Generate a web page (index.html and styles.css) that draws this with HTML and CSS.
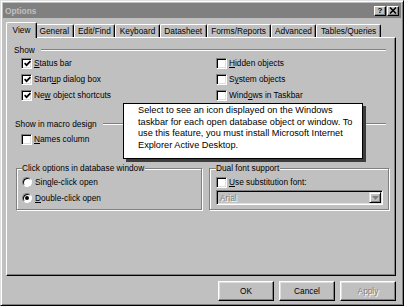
FILE: index.html
```html
<!DOCTYPE html>
<html lang="en">
<head>
    <meta charset="UTF-8">
    <title>Options</title>
    <link rel="stylesheet" href="styles.css">
</head>
<body>
    <div class="dialog">
        <div class="titleBar">
            <span class="title">Options</span>
            <div class="capBtns">
                <span class="capBtn">?</span>
                <span class="capBtn">
                    <svg width="8" height="7" viewBox="0 0 8 7"><path d="M1 0.5 L7 6.5 M7 0.5 L1 6.5" stroke="#000" stroke-width="1.6"/></svg>
                </span>
            </div>
        </div>
        <div class="tabs">
            <span class="tab selected">View</span>
            <span class="tab">General</span>
            <span class="tab">Edit/Find</span>
            <span class="tab">Keyboard</span>
            <span class="tab">Datasheet</span>
            <span class="tab">Forms/Reports</span>
            <span class="tab">Advanced</span>
            <span class="tab">Tables/Queries</span>
        </div>
        <div class="panel">
            <div class="groupHead show"><span>Show</span><i class="rule"></i></div>
            <div class="checkGrid">
                <label class="check"><span class="box"><svg width="7" height="7" viewBox="0 0 7 7"><path d="M0.6 3.2 L2.6 5.2 L6.4 1.2" fill="none" stroke="#000" stroke-width="1.7"/></svg></span><span><u>S</u>tatus bar</span></label>
                <label class="check"><span class="box"></span><span><u>H</u>idden objects</span></label>
                <label class="check"><span class="box"><svg width="7" height="7" viewBox="0 0 7 7"><path d="M0.6 3.2 L2.6 5.2 L6.4 1.2" fill="none" stroke="#000" stroke-width="1.7"/></svg></span><span>Start<u>u</u>p dialog box</span></label>
                <label class="check"><span class="box"></span><span>S<u>y</u>stem objects</span></label>
                <label class="check"><span class="box"><svg width="7" height="7" viewBox="0 0 7 7"><path d="M0.6 3.2 L2.6 5.2 L6.4 1.2" fill="none" stroke="#000" stroke-width="1.7"/></svg></span><span>Ne<u>w</u> object shortcuts</span></label>
                <label class="check"><span class="box"></span><span>Wind<u>o</u>ws in Taskbar</span></label>
            </div>
            <div class="groupHead macro"><span>Show in macro design</span><i class="rule"></i></div>
            <div class="checkGrid single">
                <label class="check"><span class="box"></span><span><u>N</u>ames column</span></label>
            </div>
            <div class="frames">
                <fieldset class="frame">
                    <legend>Click options in database window</legend>
                    <label class="check"><span class="radio"></span><span>Sin<u>g</u>le-click open</span></label>
                    <label class="check"><span class="radio on"></span><span><u>D</u>ouble-click open</span></label>
                </fieldset>
                <fieldset class="frame right">
                    <legend>Dual font support</legend>
                    <label class="check"><span class="box"></span><span><u>U</u>se substitution font:</span></label>
                    <div class="combo">
                        <span class="value">Arial</span>
                        <span class="drop">
                            <svg width="7" height="4" viewBox="0 0 7 4"><path d="M0 0 H7 L3.5 4 Z" fill="#808080"/></svg>
                        </span>
                    </div>
                </fieldset>
            </div>
            <div class="tooltip">
                Select to see an icon displayed on the Windows<br>
                taskbar for each open database object or window. To<br>
                use this feature, you must install Microsoft Internet<br>
                Explorer Active Desktop.
            </div>
        </div>
        <div class="buttons">
            <span class="btn">OK</span>
            <span class="btn">Cancel</span>
            <span class="btn disabled">Apply</span>
        </div>
    </div>
</body>
</html>
```

FILE: styles.css
```css
body {
    margin: 0;
    background-color: #c0c0c0;
    font-family: 'Liberation Sans', Arial, sans-serif;
    font-size: 8.3px;
    color: #000;
}
.dialog {
    width: 404px;
    height: 306px;
    box-sizing: border-box;
    padding: 2px;
    display: flex;
    flex-direction: column;
    background-color: #c0c0c0;
    border: 1px solid;
    border-color: #dfdfdf #000 #000 #dfdfdf;
    box-shadow: inset 1px 1px #fff, inset -1px -1px #808080;
}
.titleBar {
    height: 15px;
    display: flex;
    align-items: center;
    justify-content: space-between;
    background-color: #808080;
    padding: 0 2px 0 2px;
}
.title {
    color: #c0c0c0;
    font-weight: 700;
}
.capBtns {
    display: flex;
    gap: 1px;
}
.capBtn {
    width: 12px;
    height: 10px;
    box-sizing: border-box;
    display: flex;
    align-items: center;
    justify-content: center;
    background-color: #c0c0c0;
    border: 1px solid;
    border-color: #fff #000 #000 #fff;
    box-shadow: inset -1px -1px #808080;
    font-weight: 700;
    font-size: 8px;
    line-height: 8px;
}
.tabs {
    height: 15px;
    margin: 4px 0 0 5px;
    display: flex;
    align-items: flex-end;
    position: relative;
    z-index: 1;
}
.tab {
    height: 13px;
    min-width: 31px;
    box-sizing: border-box;
    padding: 0 3.5px;
    display: flex;
    align-items: center;
    justify-content: center;
    background-color: #c0c0c0;
    border: 1px solid;
    border-bottom: 0;
    border-color: #fff #000 #000 #fff;
    border-radius: 2px 2px 0 0;
    box-shadow: inset -1px 0 #808080;
    white-space: nowrap;
}
.tab.selected {
    height: 16px;
    margin: 0 -2px -1px -2px;
    padding-bottom: 2px;
    position: relative;
    z-index: 2;
}
.panel {
    flex: 1;
    margin: 0 5px 0 3px;
    padding: 7px 6px 0 9px;
    position: relative;
    border: 1px solid;
    border-color: #fff #000 #000 #fff;
    box-shadow: inset -1px -1px #808080;
}
.groupHead {
    height: 10px;
    display: flex;
    align-items: center;
}
.groupHead .rule {
    flex: 1;
    margin: 0 3px 0 6px;
    border-top: 1px solid #808080;
    border-bottom: 1px solid #fff;
}
.groupHead.show span {
    margin-left: -2px;
}
.groupHead.macro {
    margin-top: 16px;
}
.groupHead.macro span {
    margin-left: -1px;
}
.checkGrid {
    padding-left: 5px;
    display: grid;
    grid-template-columns: 195px 1fr;
    grid-auto-rows: 16px;
}
.checkGrid.single {
    margin-top: 2px;
}
.check {
    height: 16px;
    display: flex;
    align-items: center;
    gap: 2px;
    white-space: nowrap;
}
.box {
    width: 11px;
    height: 11px;
    box-sizing: border-box;
    display: flex;
    align-items: center;
    justify-content: center;
    background-color: #fff;
    border: 1px solid;
    border-color: #808080 #fff #fff #808080;
    box-shadow: inset 1px 1px #000, inset -1px -1px #dfdfdf;
}
.box svg {
    margin: 1px 0 0 1px;
}
.radio {
    width: 10px;
    height: 10px;
    margin-right: 1px;
    box-sizing: border-box;
    display: flex;
    align-items: center;
    justify-content: center;
    border-radius: 50%;
    background-color: #fff;
    border: 1px solid;
    border-color: #808080 #fff #fff #808080;
    box-shadow: inset 1px 1px #000;
}
.radio.on::after {
    content: '';
    width: 4px;
    height: 4px;
    border-radius: 50%;
    background-color: #000;
}
.frames {
    margin-top: 16px;
    display: grid;
    grid-template-columns: 186px 180px;
    gap: 7px;
}
.frame {
    margin: 0;
    min-width: 0;
    padding: 1px 5px 3px 5px;
    border: 1px solid #808080;
    box-shadow: 1px 1px #fff, inset 1px 1px #fff;
}
.frame legend {
    height: 10px;
    line-height: 10px;
    padding: 0 1px 0 0;
    background-color: #c0c0c0;
}
.frame.right {
    padding: 1px 5px 3px 6px;
}
.combo {
    height: 15px;
    margin-top: 0;
    box-sizing: border-box;
    display: flex;
    align-items: center;
    background-color: #c0c0c0;
    border: 1px solid;
    border-color: #808080 #fff #fff #808080;
    box-shadow: inset 1px 1px #000, inset -1px -1px #dfdfdf;
}
.combo .value {
    flex: 1;
    padding-left: 3px;
    color: #808080;
    text-shadow: 1px 1px #fff;
}
.combo .drop {
    width: 12px;
    height: 11px;
    margin-right: 1px;
    box-sizing: border-box;
    display: flex;
    align-items: center;
    justify-content: center;
    border: 1px solid;
    border-color: #dfdfdf #000 #000 #dfdfdf;
    box-shadow: inset 1px 1px #fff, inset -1px -1px #808080;
}
.tooltip {
    position: absolute;
    left: 116px;
    top: 65px;
    width: 240px;
    height: 56px;
    box-sizing: border-box;
    padding: 1px 0 0 14px;
    background-color: #fff;
    border: 1px solid #000;
    box-shadow: 3px 3px 0 #3c3c3c;
    font-size: 9.2px;
    line-height: 11.5px;
    white-space: nowrap;
}
.buttons {
    margin: 5px 5px 2px 0;
    display: flex;
    justify-content: flex-end;
    gap: 5px;
}
.btn {
    width: 56px;
    height: 20px;
    box-sizing: border-box;
    display: flex;
    align-items: center;
    justify-content: center;
    border: 1px solid;
    border-color: #fff #000 #000 #fff;
    box-shadow: inset -1px -1px #808080, inset 1px 1px #dfdfdf;
}
.btn.disabled {
    color: #808080;
    text-shadow: 1px 1px #fff;
}
```
